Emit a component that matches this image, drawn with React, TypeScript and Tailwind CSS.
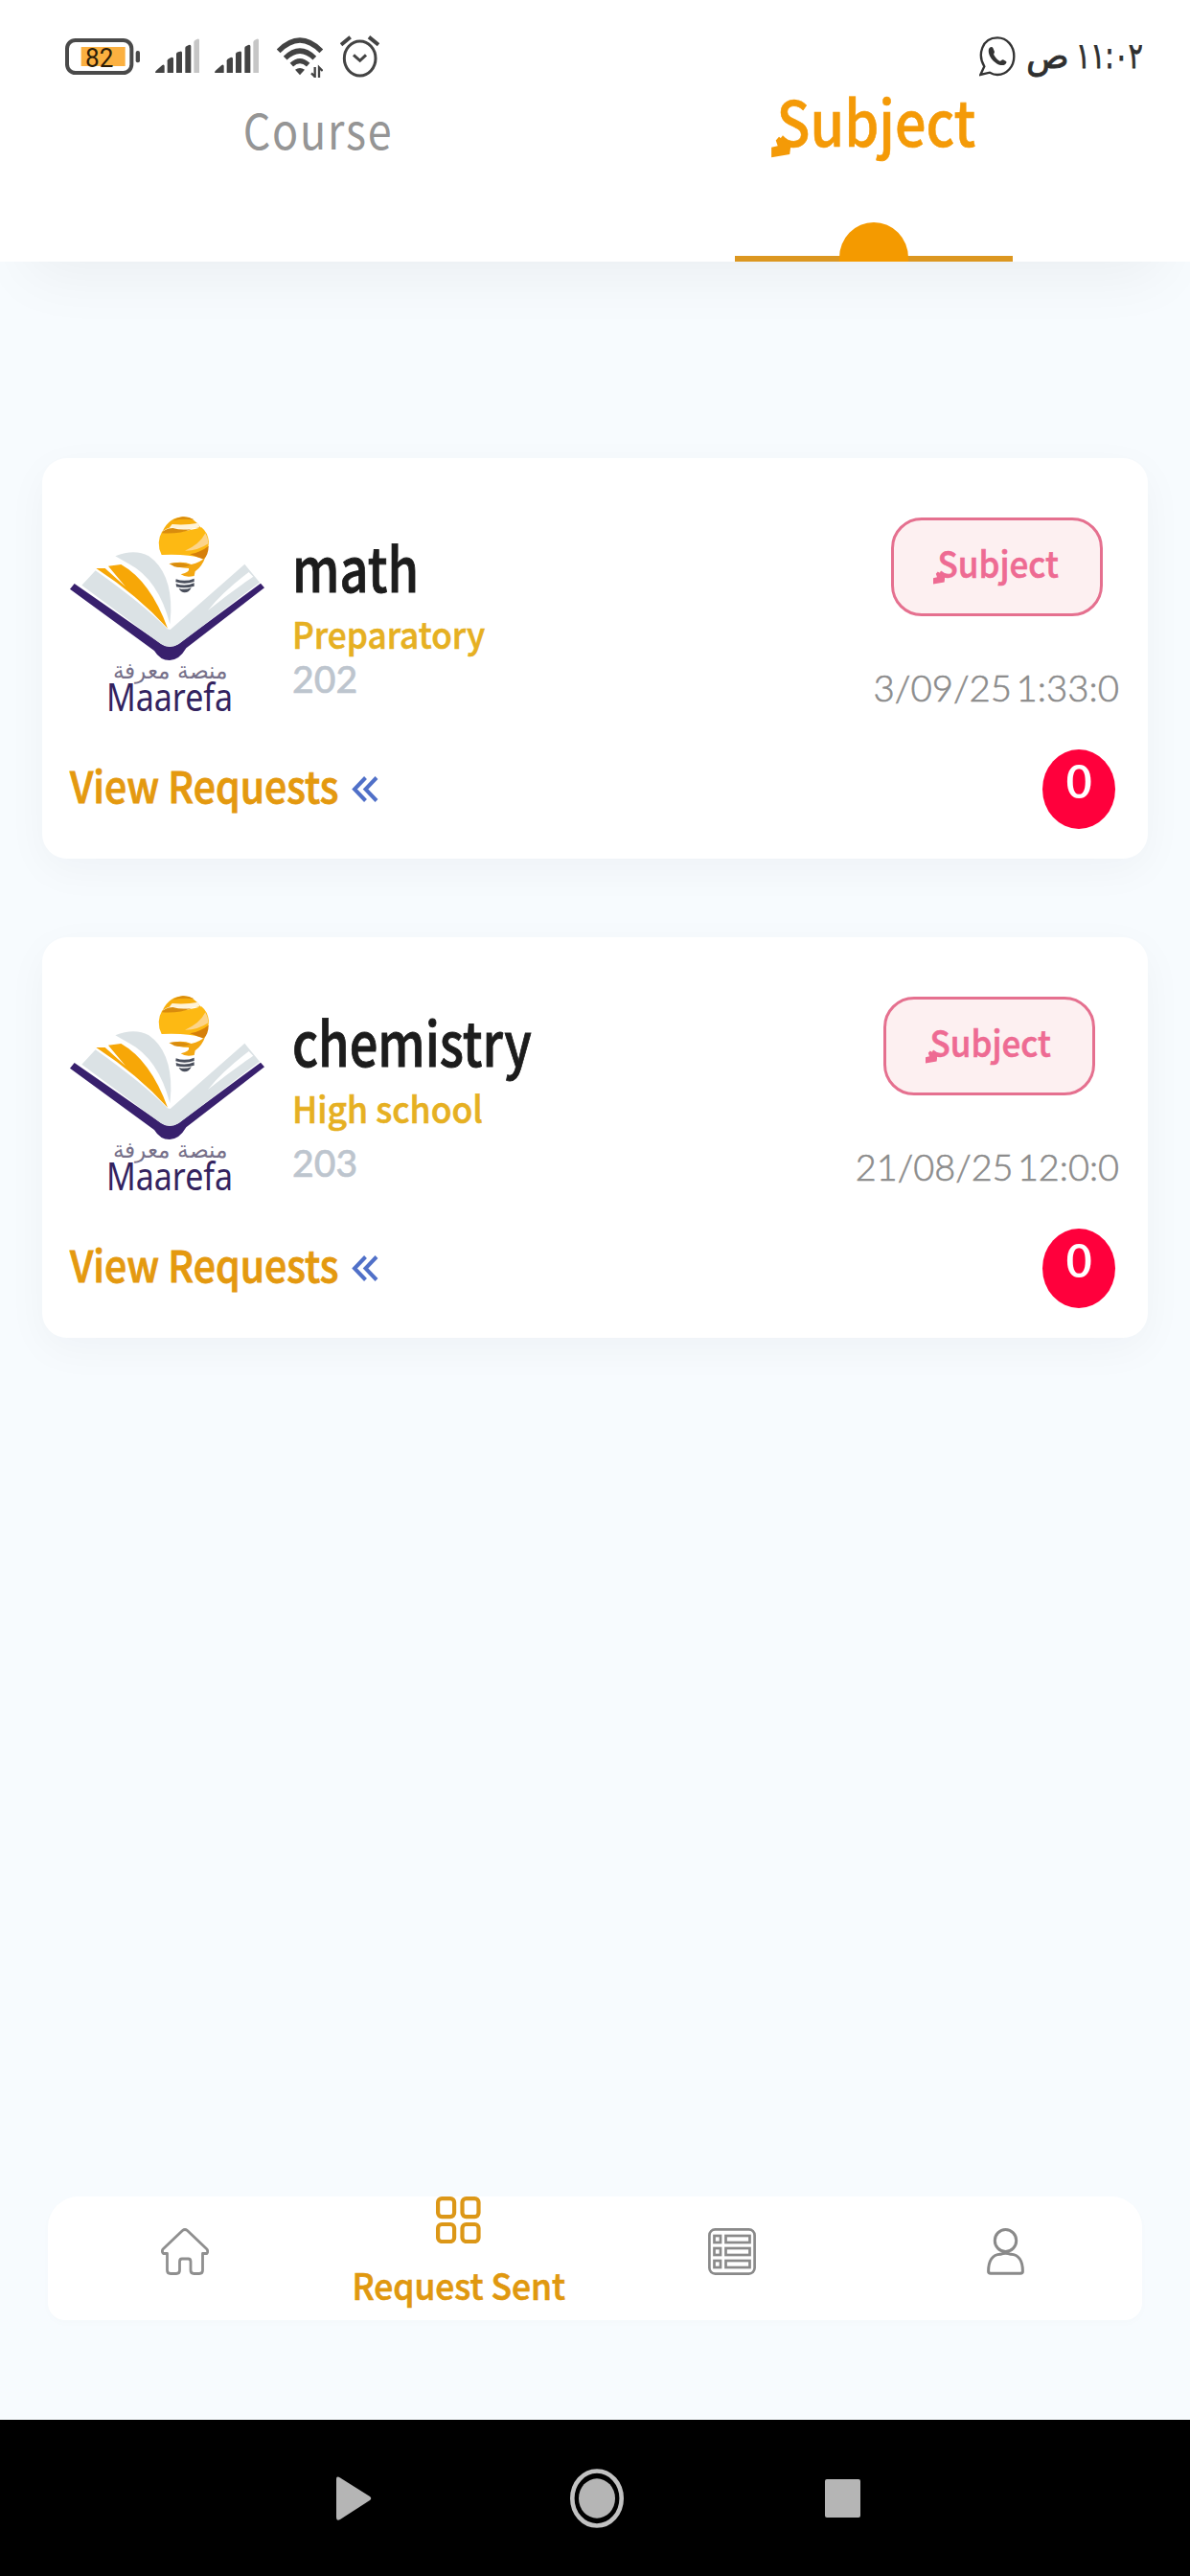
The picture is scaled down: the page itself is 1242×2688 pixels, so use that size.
import clsx from 'clsx';

interface RequestItem {
  id: number;
  title: string;
  level: string;
  date: string;
  count: number;
  titleClass: string;
  levelClass: string;
  idClass: string;
  pillClass: string;
  dateClass: string;
}

const REQUESTS: RequestItem[] = [
  {
    id: 202,
    title: 'math',
    level: 'Preparatory',
    date: '3/09/25 1:33:0',
    count: 0,
    titleClass: 'mt-[20px] scale-x-[0.832]',
    levelClass: 'mt-[20px] scale-x-[0.927]',
    idClass: 'mt-[9px]',
    pillClass: 'mr-[17px]',
    dateClass: 'scale-x-[1.01]',
  },
  {
    id: 203,
    title: 'chemistry',
    level: 'High school',
    date: '21/08/25 12:0:0',
    count: 0,
    titleClass: 'mt-[15px] scale-x-[0.832]',
    levelClass: 'mt-[20px] scale-x-[0.935]',
    idClass: 'mt-[19px]',
    pillClass: 'mr-[25px]',
    dateClass: 'scale-x-[0.997]',
  },
];

function BatteryIcon() {
  return (
    <svg width="78" height="38" viewBox="0 0 234 114">
      <rect x="6" y="6" width="202" height="102" rx="26" fill="none" stroke="#4a4a4a" strokeWidth="12" />
      <rect x="50" y="27" width="138" height="60" fill="#fbb040" />
      <rect x="221" y="39" width="13" height="37" rx="6" fill="#4a4a4a" />
      <text x="63" y="90" fontFamily="Roboto" fontSize="84" textLength="88" lengthAdjust="spacingAndGlyphs" fill="#2b1c08">
        82
      </text>
    </svg>
  );
}

function SignalIcon() {
  return (
    <svg width="46" height="37" viewBox="0 0 138 111" fill="#434343">
      <path d="M0 107 Q0 102 6 98 L22 84 Q29 80 29 88 V108 H2 Z" />
      <path d="M38 70 Q38 66 44 63 L50 60 Q57 58 57 64 V108 H38 Z" />
      <path d="M66 49 Q66 45 72 43 L78 41 Q84 39 84 45 V108 H66 Z" />
      <path d="M94 30 Q94 26 99 24 L105 21 Q112 19 112 25 V108 H94 Z" />
      <path d="M121 12 Q121 8 126 5 L132 2 Q138 0 138 6 V108 H121 Z" fill="#c6c6c6" />
    </svg>
  );
}

function WifiIcon() {
  return (
    <svg width="48" height="42" viewBox="0 0 144 126" fill="none" stroke="#434343">
      <path d="M5 43 Q72 -25 139 43" strokeWidth="16" />
      <path d="M26 65 Q72 20 118 65" strokeWidth="16" />
      <path d="M46 86 Q72 62 98 86" strokeWidth="15" />
      <path d="M57 101 Q72 91 87 101 L72 118 Z" fill="#434343" stroke="none" />
      <path d="M119 93 V126 M108 112 L119 123 M132 126 V94 L143 105" strokeWidth="7" />
    </svg>
  );
}

function AlarmIcon() {
  return (
    <svg width="41" height="44" viewBox="0 0 123 132" fill="none" stroke="#434343">
      <ellipse cx="62" cy="72" rx="49" ry="54" strokeWidth="9" />
      <path d="M42 61 L62 79 L81 61" strokeWidth="9" />
      <path d="M3 29 L32 5 M90 5 L120 29" strokeWidth="12" />
    </svg>
  );
}

function WhatsappIcon() {
  return (
    <svg width="38" height="42" viewBox="0 0 114 126" fill="none" stroke="#333">
      <path d="M16 94 C-6 58 8 4 57 4 C88 4 109 31 109 62 C109 94 87 120 57 120 C47 120 40 117 33 113 L4 120 Z" strokeWidth="7" />
      <path
        d="M30 39 C34 31 42 31 44 38 L48 48 C48 53 44 54 46 58 C51 67 56 73 64 77 C68 79 70 72 75 73 L84 78 C88 81 83 88 76 90 C54 94 24 62 30 39 Z"
        fill="#333"
        stroke="none"
      />
    </svg>
  );
}

function StatusBar() {
  return (
    <div className="flex h-[88px] items-center justify-between pt-[29px] pr-[49px] pl-[68px]">
      <div className="flex items-center">
        <BatteryIcon />
        <div className="ml-4">
          <SignalIcon />
        </div>
        <div className="ml-4">
          <SignalIcon />
        </div>
        <div className="ml-[19px] pt-[3px]">
          <WifiIcon />
        </div>
        <div className="ml-[18px]">
          <AlarmIcon />
        </div>
      </div>
      <div className="flex items-center font-['DejaVu_Sans',sans-serif] text-[37px] leading-none text-[#2f2f2f] [-webkit-text-stroke:0.8px]">
        <WhatsappIcon />
        <span className="ml-[11px] w-[44px] text-center">ص</span>
        <span className="ml-[8px] flex w-[70px] justify-center whitespace-nowrap">
          <span dir="rtl" className="shrink-0 scale-x-[0.76]">
            ١١:٠٢
          </span>
        </span>
      </div>
    </div>
  );
}

// kasratan mark under the first letter of "Subject"
function KasraMark({ className }: { className: string }) {
  return (
    <svg viewBox="0 0 60 70" className={clsx('absolute', className)} fill="currentColor">
      <path d="M0 36 L20 31 L14 14 L24 2 L46 18 L62 26 L58 58 L0 68 Z" />
    </svg>
  );
}

function Tabs() {
  return (
    <div className="grid h-[185px] grid-cols-2 pr-[40px] pl-[42px]">
      <button className="flex flex-col items-center pt-[21px]">
        <span className="scale-x-[0.88] text-[51px] leading-none tracking-[2px] text-[#959595]">Course</span>
      </button>
      <button className="flex flex-col items-center justify-between pt-[5px]">
        <span className="relative ml-[5px] text-[#f49a07]">
          <span className="block scale-x-[0.885] text-[65px] leading-none font-medium [-webkit-text-stroke:0.6px]">Subject</span>
          <KasraMark className="top-[49px] left-[8px] h-[23px] w-[20px]" />
        </span>
        <svg width="290" height="41" viewBox="0 0 290 41">
          <rect y="35" width="290" height="6" fill="#dc9720" />
          <path d="M109 41 V37 A36 37 0 0 1 181 37 V41 Z" fill="#f49a00" />
        </svg>
      </button>
    </div>
  );
}

function MaarefaLogo() {
  return (
    <svg width="204" height="205" viewBox="98 88 612 615" className="shrink-0 overflow-visible">
      <path d="M98 315 L112 298 L385 488 Q410 503 437 488 L695 297 L707 311 L462 500 Q440 538 410 538 Q380 538 362 508 Z" fill="#38206d" />
      <path d="M135 303 L178 257 Q330 365 403 440 L412 442 L645 237 L692 294 L440 486 Q410 506 382 486 Z" fill="#dbe2e5" />
      <path d="M658 262 L672 276 Q600 325 530 382 Q575 325 658 262 Z" fill="#fff" />
      <path d="M240 212 Q300 188 345 212 Q416 262 414 385 L411 425 Q375 285 282 236 Z" fill="#dbe2e5" />
      <path d="M180 250 L208 250 L272 308 L218 243 L258 238 Q350 290 404 438 Q310 335 180 250 Z" fill="#f7a707" />

      {/* bulb */}
      <path d="M388 134 Q410 89 455 89 Q486 89 510 126 Q480 116 440 117 Q410 117 388 134 Z" fill="#f7ae0c" />
      <path d="M420 101 Q450 94 487 98 Q470 88 450 89 Q432 92 420 101 Z" fill="#d98c0d" />
      <path d="M418 112 Q460 116 500 108 L504 122 Q460 132 410 122 Z" fill="#fff3d6" />
      <path d="M387 134 Q440 142 510 122 Q530 138 533 168 Q532 200 507 218 Q470 205 385 208 Q366 170 387 134 Z" fill="#fdb913" />
      <path d="M386 140 Q392 126 420 124 Q450 132 480 126 Q440 144 386 140 Z" fill="#d98c0d" />
      <path d="M522 140 Q505 175 458 195 Q500 195 532 172 Q531 155 522 140 Z" fill="#fcd48a" />
      <path d="M532 180 Q510 198 474 206 L517 222 Q532 206 532 180 Z" fill="#d67f0a" />
      <path d="M408 236 Q450 226 478 238 Q507 232 522 215 Q512 245 490 260 L487 274 Q460 280 445 269 Q475 262 470 250 Q435 250 408 236 Z" fill="#f3a712" />
      <path d="M410 235 Q445 228 475 240 Q450 250 425 245 Z" fill="#d98c0d" />
      <path d="M430 284 Q458 294 487 282 V292 Q458 302 429 293 Z M430 298 Q458 308 487 296 V306 Q458 315 431 308 Z M439 313 Q458 319 478 311 Q472 326 457 326 Q446 326 439 313 Z" fill="#4a4f5c" />

      <text x="412" y="594" textAnchor="middle" direction="rtl" fontFamily="'DejaVu Sans'" fontSize="72" fontWeight="200" textLength="360" lengthAdjust="spacingAndGlyphs" fill="#77718a">
        منصة معرفة
      </text>
      <text x="212" y="697" fontFamily="'Noto Sans'" fontSize="118" textLength="396" lengthAdjust="spacingAndGlyphs" fill="#33235f">
        Maarefa
      </text>
    </svg>
  );
}

function RequestCard({ item }: { item: RequestItem }) {
  return (
    <article className="flex h-[418px] flex-col rounded-[26px] bg-white pt-[61px] pr-[30px] pl-[29px] shadow-[0_12px_44px_rgba(20,30,40,0.04)]">
      <div className="flex h-[204px]">
        <MaarefaLogo />
        <div className="ml-[28px] flex flex-1 flex-col items-start">
          <h3 className={clsx('origin-left text-[63px] leading-none font-medium text-[#1c1c1c] [-webkit-text-stroke:0.9px]', item.titleClass)}>
            {item.title}
          </h3>
          <p className={clsx('origin-left text-[38px] leading-none font-medium text-[#e6b022] [-webkit-text-stroke:0.6px]', item.levelClass)}>
            {item.level}
          </p>
          <p
            className={clsx(
              "origin-left scale-x-[1.03] font-['Lato',sans-serif] text-[38px] leading-none font-medium text-[#bdc5ce] [-webkit-text-stroke:0.5px]",
              item.idClass,
            )}
          >
            {item.id}
          </p>
        </div>
        <div className="flex flex-col items-end pt-px">
          <div
            className={clsx(
              'flex h-[103px] w-[221px] shrink-0 justify-center rounded-[32px] border-[3px] border-[#e5708f] bg-[#fdf0f1] pt-[25px] text-[#ee6b93]',
              item.pillClass,
            )}
          >
            <span className="relative ml-[3px]">
              <span className="block scale-x-[0.92] text-[38px] leading-none font-medium [-webkit-text-stroke:0.6px]">Subject</span>
              <KasraMark className="top-[28px] left-[1px] h-[14px] w-[12px]" />
            </span>
          </div>
          <span
            className={clsx(
              "mt-[55px] origin-right font-['Lato',sans-serif] text-[38px] leading-none font-light [word-spacing:-6px] whitespace-nowrap text-[#8c8c8c] [-webkit-text-stroke:0.6px]",
              item.dateClass,
            )}
          >
            {item.date}
          </span>
        </div>
      </div>
      <div className="mt-[39px] flex justify-between pr-1">
        <button className="flex items-start pt-[14px]">
          <span className="w-[294px] origin-left scale-x-[0.909] text-left text-[45px] leading-none font-medium whitespace-nowrap text-[#e4990f] [-webkit-text-stroke:0.9px]">
            View Requests
          </span>
          <svg width="28" height="27" viewBox="0 0 28 27" className="mt-[14px]" fill="none" stroke="#5070c8" strokeWidth="4">
            <path d="M14.5 1.5 L3 13.5 L14.5 25.5 M26 1.500 L14.5 13.5 L26 25.5" />
          </svg>
        </button>
        <div className="flex h-[83px] w-[76px] justify-center rounded-[50%] bg-[#ff003c] pt-[7px]">
          <span className="scale-x-[1.12] text-[46px] leading-none font-medium text-white">{item.count}</span>
        </div>
      </div>
    </article>
  );
}

function BottomNav() {
  return (
    <nav className="mx-[50px] mb-[104px] grid h-[129px] grid-cols-4 rounded-t-[32px] rounded-b-[18px] bg-white shadow-[0_3px_10px_rgba(0,0,0,0.015)]">
      <button className="flex justify-center pt-[33px]">
        <svg width="50" height="49" viewBox="0 0 50 49" fill="none" stroke="#8f8f8f" strokeWidth="2.8" strokeLinejoin="round">
          <path d="M22.5 2.5 Q25 0.5 27.5 2.5 L48 22 Q49.5 24.5 48 26.5 H43.5 V44 Q43.5 47.500 40 47.5 H34.5 Q31 47.5 31 44 V35 Q31 32 28.5 32 H22 Q19.5 32 19.5 35 V44 Q19.5 47.5 16 47.5 H10 Q6.5 47.5 6.5 44 V26.5 H2.5 Q0.5 24.5 2 22 Z" />
        </svg>
      </button>
      <button className="flex flex-col items-center">
        <svg width="47" height="49" viewBox="0 0 47 49" fill="none" stroke="#dc9717" strokeWidth="4.2">
          <rect x="2.1" y="2.1" width="17" height="19" rx="4" />
          <rect x="27.5" y="2.1" width="17" height="19" rx="4" />
          <rect x="2.1" y="29" width="17" height="18" rx="4" />
          <rect x="27.5" y="29" width="17" height="18" rx="4" />
        </svg>
        <span className="mt-[24px] scale-x-[0.93] text-[38px] leading-none font-medium whitespace-nowrap text-[#e0980f] [-webkit-text-stroke:0.7px]">
          Request Sent
        </span>
      </button>
      <button className="flex justify-center pt-[33px]">
        <svg width="50" height="49" viewBox="0 0 50 49" fill="none" stroke="#8a8a8a" strokeWidth="2.7">
          <rect x="1.4" y="1.4" width="47.2" height="46.2" rx="6" />
          <rect x="6.5" y="8" width="6.5" height="7" />
          <rect x="18.5" y="8" width="25" height="7" />
          <rect x="6.5" y="21" width="6.5" height="7" />
          <rect x="18.5" y="21" width="25" height="7" />
          <rect x="6.5" y="34" width="6.5" height="7" />
          <rect x="18.5" y="34" width="25" height="7" />
        </svg>
      </button>
      <button className="flex justify-center pt-[33px]">
        <svg width="39" height="49" viewBox="0 0 39 49" fill="none" stroke="#8a8a8a" strokeWidth="3" strokeLinejoin="round">
          <ellipse cx="19.5" cy="13" rx="11.2" ry="11.5" />
          <path d="M1.600 45 C1.6 34 6 27.5 14 27.3 Q19.5 25 25 27.3 C33 27.5 37.4 34 37.4 45 Q37.4 47.3 35 47.3 H4 Q1.6 47.3 1.6 45 Z" />
        </svg>
      </button>
    </nav>
  );
}

function SystemBar() {
  return (
    <div className="flex h-[163px] items-center bg-black pl-[351px]">
      <svg width="37" height="54" viewBox="0 0 37 54" fill="#b5b5b5">
        <path d="M0 7 Q0 3 4 5.5 L35 25 Q37.500 27 35 29 L4 49 Q0 51 0 47 Z" />
      </svg>
      <svg width="56" height="62" viewBox="0 0 56 62" className="ml-[207px]">
        <ellipse cx="28" cy="31" rx="25.7" ry="28.5" fill="none" stroke="#c2c2c2" strokeWidth="4.6" />
        <ellipse cx="28" cy="31" rx="19" ry="20.7" fill="#b5b5b5" />
      </svg>
      <div className="ml-[210px] h-10 w-[37px] rounded-[2px] bg-[#b5b5b5]" />
    </div>
  );
}

export default function App() {
  return (
    <div className="flex h-[2688px] w-[1242px] flex-col bg-[#f7fbfe] font-['Noto_Sans_CJK_SC','Noto_Sans',sans-serif]">
      <header className="bg-white shadow-[0_44px_60px_-30px_rgba(0,0,0,0.055)]">
        <StatusBar />
        <Tabs />
      </header>

      <main className="flex flex-1 flex-col gap-[82px] px-[44px] pt-[205px]">
        {REQUESTS.map((item) => (
          <RequestCard key={item.id} item={item} />
        ))}
      </main>

      <BottomNav />
      <SystemBar />
    </div>
  );
}
